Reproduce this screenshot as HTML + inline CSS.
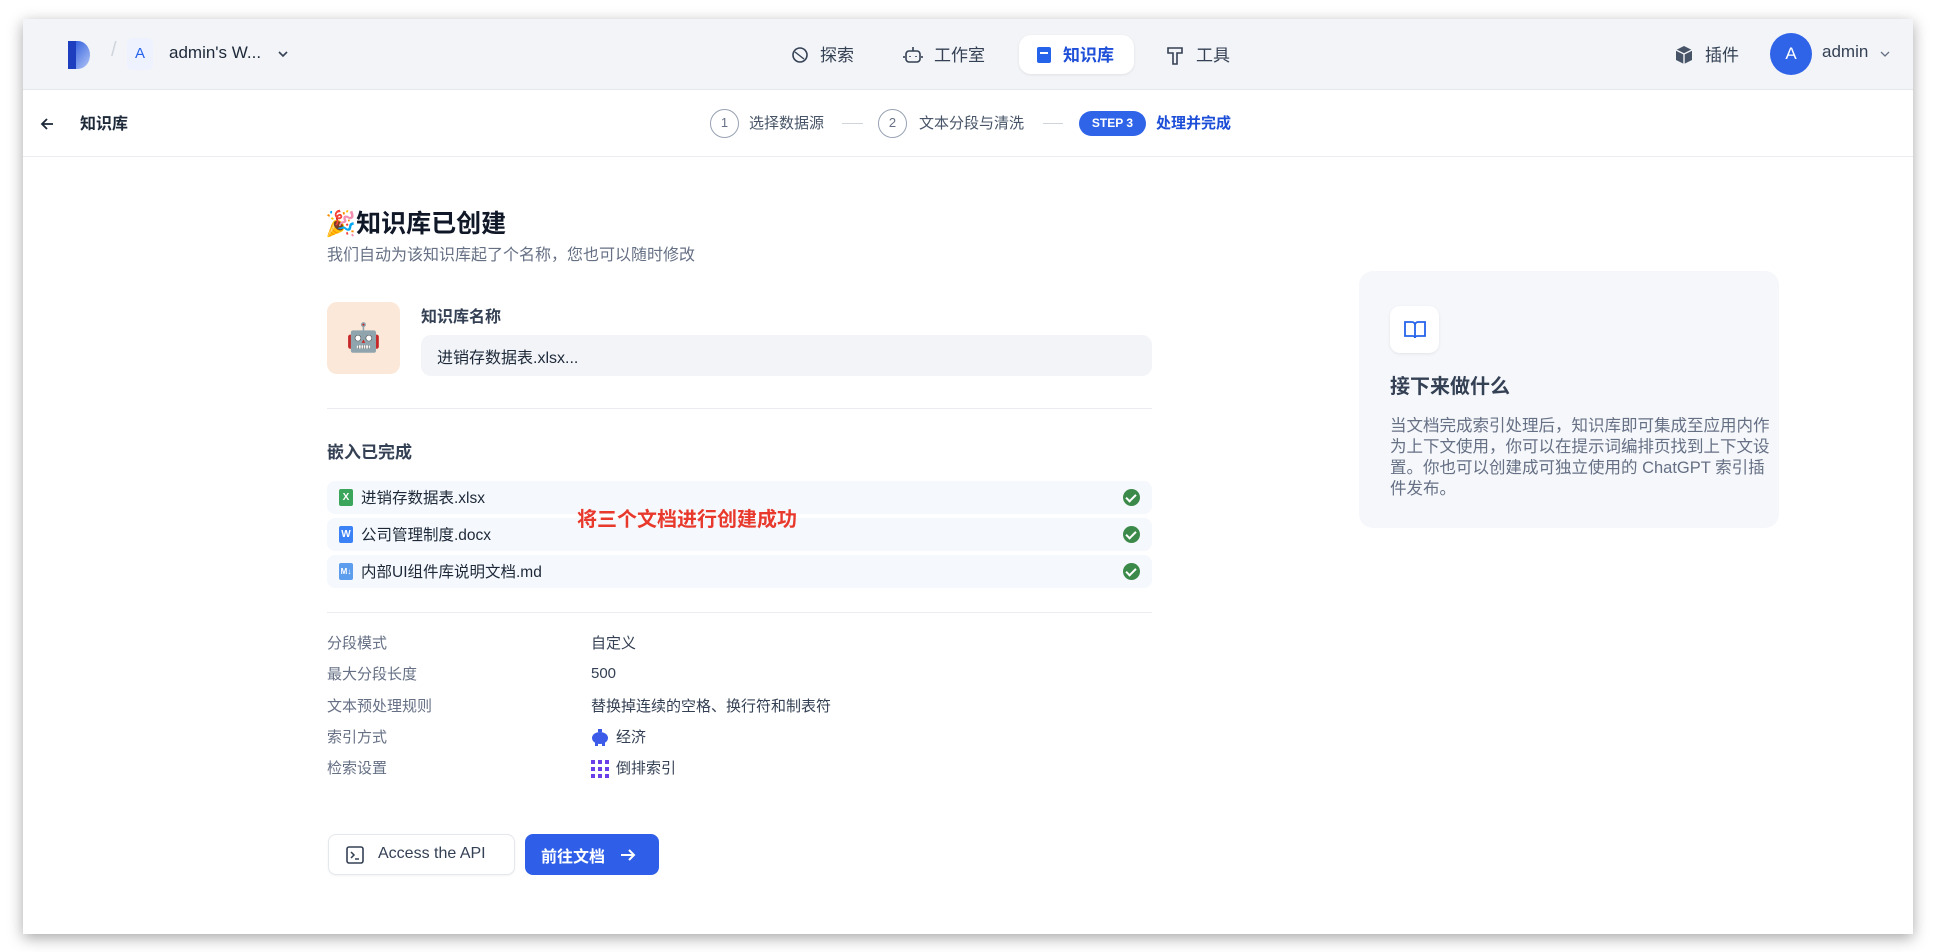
<!DOCTYPE html>
<html><head><meta charset="utf-8"><style>
*{box-sizing:border-box;margin:0;padding:0}
body{width:1934px;height:952px;background:#fff;font-family:"Liberation Sans","Noto Sans CJK SC",sans-serif;position:relative;overflow:hidden;color:#1d2939}
.win{position:absolute;left:23px;top:19px;width:1890px;height:915px;background:#fff;box-shadow:0 4px 14px rgba(0,0,0,.35);overflow:hidden}
.hdr{position:absolute;left:0;top:0;width:100%;height:71px;background:#f2f4f7;border-bottom:1px solid #e4e7ec}
.a{position:absolute;white-space:nowrap}
.sub{position:absolute;left:0;top:71px;width:100%;height:67px;border-bottom:1px solid #eaecf0}
.nav{font-size:17px;color:#344054;top:22px}
.lbl{font-size:15px;color:#667085;left:304px}
.val{font-size:15px;color:#344054;left:568px}
.row{position:absolute;left:304px;width:825px;height:33px;background:#f5f8fc;border-radius:8px;font-size:15.5px;color:#1d2939}
.row span{position:absolute;left:34px;top:5px}
.row i{position:absolute;left:12px;top:8px;width:14px;height:17px;border-radius:2px;color:#fff;font-size:10px;font-style:normal;text-align:center;line-height:17px;font-weight:bold}
.chk{position:absolute;right:12px;top:8px;width:17px;height:17px;border-radius:50%;background:#3c8a4a}
.chk:after{content:"";position:absolute;left:5px;top:3px;width:4px;height:8px;border:solid #fff;border-width:0 2px 2px 0;transform:rotate(45deg)}
</style></head><body>
<div class="win">
 <div class="hdr">
  <svg class="a" style="left:45px;top:22px" width="24" height="28" viewBox="0 0 24 28"><defs><linearGradient id="g" x1="0" y1="0" x2="1" y2="1"><stop offset="0" stop-color="#1d4ed8"/><stop offset="1" stop-color="#b3c7f7"/></linearGradient></defs><path d="M0 0h10a12 14 0 0 1 0 28H0z" fill="url(#g)"/><rect x="0" y="0" width="8" height="28" fill="#1d3fbf"/></svg>
  <div class="a" style="left:88px;top:20px;font-size:20px;color:#d0d5dd">/</div>
  <div class="a" style="left:104px;top:19px;width:26px;height:32px;background:#eef2ff;border-radius:6px;color:#2563eb;font-size:15px;text-align:center;line-height:32px">A</div>
  <div class="a" style="left:146px;top:24px;font-size:17px;color:#1d2939">admin's W...</div>
  <svg class="a" style="left:254px;top:30px" width="12" height="10"><path d="M2 3l4 4 4-4" stroke="#344054" stroke-width="1.6" fill="none"/></svg>
  <svg class="a" style="left:768px;top:27px" width="18" height="18" viewBox="0 0 18 18"><circle cx="9" cy="9" r="7" stroke="#344054" stroke-width="1.6" fill="none"/><path d="M4 6l9 7" stroke="#344054" stroke-width="1.4"/></svg>
  <div class="a nav" style="left:797px">探索</div>
  <svg class="a" style="left:880px;top:26px" width="20" height="20" viewBox="0 0 20 20"><rect x="3" y="6" width="14" height="11" rx="3" stroke="#344054" stroke-width="1.6" fill="none"/><path d="M10 2v4M7 11v1M13 11v1M1 11v2M19 11v2" stroke="#344054" stroke-width="1.6"/></svg>
  <div class="a nav" style="left:911px">工作室</div>
  <div class="a" style="left:996px;top:16px;width:115px;height:39px;background:#fff;border-radius:12px;box-shadow:0 1px 3px rgba(0,0,0,.08)"></div>
  <svg class="a" style="left:1013px;top:27px" width="16" height="18" viewBox="0 0 16 18"><rect x="1" y="1" width="14" height="16" rx="2" fill="#2563eb"/><rect x="4" y="6" width="8" height="2" fill="#fff"/></svg>
  <div class="a nav" style="left:1040px;color:#1d4ed8;font-weight:bold">知识库</div>
  <svg class="a" style="left:1143px;top:27px" width="18" height="20" viewBox="0 0 18 20"><path d="M2 2h14v5H11v11H7V7H2z" stroke="#344054" stroke-width="1.6" fill="none"/></svg>
  <div class="a nav" style="left:1173px">工具</div>
  <svg class="a" style="left:1652px;top:26px" width="18" height="20" viewBox="0 0 18 20"><path d="M9 1l8 4v10l-8 4-8-4V5z" fill="#475467"/><path d="M1 5l8 4 8-4M9 9v10" stroke="#f2f4f7" stroke-width="1.4" fill="none"/></svg>
  <div class="a nav" style="left:1682px">插件</div>
  <div class="a" style="left:1747px;top:14px;width:42px;height:42px;border-radius:50%;background:#2f64e8;color:#fff;font-size:17px;text-align:center;line-height:42px">A</div>
  <div class="a nav" style="left:1799px;top:23px">admin</div>
  <svg class="a" style="left:1857px;top:31px" width="10" height="8"><path d="M1 2l4 4 4-4" stroke="#667085" stroke-width="1.3" fill="none"/></svg>
 </div>
 <div class="sub">
  <svg class="a" style="left:16px;top:26px" width="16" height="16" viewBox="0 0 16 16"><path d="M14 8H3M8 3L3 8l5 5" stroke="#1d2939" stroke-width="1.8" fill="none"/></svg>
  <div class="a" style="left:57px;top:20px;font-size:16px;font-weight:bold">知识库</div>
  <div class="a" style="left:687px;top:19px;width:29px;height:29px;border:1.5px solid #98a2b3;border-radius:50%;font-size:13px;color:#667085;text-align:center;line-height:26px">1</div>
  <div class="a" style="left:726px;top:22px;font-size:15px;color:#475467">选择数据源</div>
  <div class="a" style="left:819px;top:33px;width:21px;height:1px;background:#d0d5dd"></div>
  <div class="a" style="left:855px;top:19px;width:29px;height:29px;border:1.5px solid #98a2b3;border-radius:50%;font-size:13px;color:#667085;text-align:center;line-height:26px">2</div>
  <div class="a" style="left:896px;top:22px;font-size:15px;color:#475467">文本分段与清洗</div>
  <div class="a" style="left:1020px;top:33px;width:20px;height:1px;background:#d0d5dd"></div>
  <div class="a" style="left:1056px;top:21px;width:67px;height:25px;background:#2f64e8;border-radius:13px;color:#fff;font-size:12px;font-weight:bold;text-align:center;line-height:25px">STEP 3</div>
  <div class="a" style="left:1133px;top:22px;font-size:15px;color:#1d4ed8;font-weight:bold">处理并完成</div>
 </div>

 <div class="a" style="left:302px;top:185px;font-size:25px;font-weight:bold;color:#101828">🎉知识库已创建</div>
 <div class="a" style="left:304px;top:222px;font-size:16px;color:#667085">我们自动为该知识库起了个名称，您也可以随时修改</div>
 <div class="a" style="left:304px;top:283px;width:73px;height:72px;background:#fbe8d8;border-radius:10px;text-align:center;line-height:72px;font-size:28px">🤖</div>
 <div class="a" style="left:398px;top:284px;font-size:16px;font-weight:bold;color:#344054">知识库名称</div>
 <div class="a" style="left:398px;top:316px;width:731px;height:41px;background:#f2f4f7;border-radius:10px;font-size:16px;padding:9px 16px;color:#1d2939">进销存数据表.xlsx...</div>
 <div class="a" style="left:304px;top:389px;width:825px;height:1px;background:#eaecf0"></div>
 <div class="a" style="left:304px;top:419px;font-size:17px;font-weight:bold;color:#344054">嵌入已完成</div>
 <div class="row" style="top:462px"><i style="background:#3ba55c">X</i><span>进销存数据表.xlsx</span><div class="chk"></div></div>
 <div class="row" style="top:499px"><i style="background:#3b82f6">W</i><span>公司管理制度.docx</span><div class="chk"></div></div>
 <div class="row" style="top:536px"><i style="background:#5c9ded;font-size:8px">M↓</i><span>内部UI组件库说明文档.md</span><div class="chk"></div></div>
 <div class="a" style="left:554px;top:484px;font-size:20px;font-weight:bold;color:#e8392c">将三个文档进行创建成功</div>
 <div class="a" style="left:304px;top:593px;width:825px;height:1px;background:#eaecf0"></div>
 <div class="a lbl" style="top:613px">分段模式</div><div class="a val" style="top:613px">自定义</div>
 <div class="a lbl" style="top:644px">最大分段长度</div><div class="a val" style="top:646px">500</div>
 <div class="a lbl" style="top:676px">文本预处理规则</div><div class="a val" style="top:676px">替换掉连续的空格、换行符和制表符</div>
 <div class="a lbl" style="top:707px">索引方式</div>
 <svg class="a" style="left:568px;top:709px" width="18" height="18" viewBox="0 0 18 18"><ellipse cx="9" cy="10" rx="8" ry="6" fill="#3b5be8"/><rect x="7" y="1" width="4" height="3" fill="#3b5be8"/><rect x="4" y="14" width="3" height="4" fill="#3b5be8"/><rect x="11" y="14" width="3" height="4" fill="#3b5be8"/></svg>
 <div class="a val" style="top:707px;left:593px">经济</div>
 <div class="a lbl" style="top:738px">检索设置</div>
 <svg class="a" style="left:568px;top:741px" width="18" height="18" viewBox="0 0 18 18" fill="#6a3ee8"><rect x="0" y="0" width="4" height="4"/><rect x="7" y="0" width="4" height="4"/><rect x="14" y="0" width="4" height="4"/><rect x="0" y="7" width="4" height="4"/><rect x="7" y="7" width="4" height="4"/><rect x="14" y="7" width="4" height="4"/><rect x="0" y="14" width="4" height="4"/><rect x="7" y="14" width="4" height="4"/><rect x="14" y="14" width="4" height="4"/></svg>
 <div class="a val" style="top:738px;left:593px">倒排索引</div>

 <div class="a" style="left:305px;top:815px;width:187px;height:41px;border:1px solid #e4e7ec;border-radius:8px;background:#fff;box-shadow:0 1px 2px rgba(0,0,0,.05)">
  <svg class="a" style="left:17px;top:11px" width="18" height="18" viewBox="0 0 18 18"><rect x="1" y="1" width="16" height="16" rx="2" stroke="#344054" stroke-width="1.6" fill="none"/><path d="M5 6l3 3-3 3M9 13h4" stroke="#344054" stroke-width="1.5" fill="none"/></svg>
  <div class="a" style="left:49px;top:10px;font-size:16px;color:#344054">Access the API</div>
 </div>
 <div class="a" style="left:502px;top:815px;width:134px;height:41px;border-radius:8px;background:#2f5fe8">
  <div class="a" style="left:16px;top:9px;font-size:16px;color:#fff;font-weight:bold">前往文档</div>
  <svg class="a" style="left:94px;top:12px" width="18" height="18" viewBox="0 0 18 18"><path d="M2 9h13M10 4l5 5-5 5" stroke="#fff" stroke-width="2" fill="none"/></svg>
 </div>

 <div class="a" style="left:1336px;top:252px;width:420px;height:257px;background:#f5f7fa;border-radius:14px">
  <div class="a" style="left:31px;top:35px;width:49px;height:47px;background:#fff;border-radius:10px;box-shadow:0 1px 3px rgba(0,0,0,.08)">
   <svg class="a" style="left:14px;top:14px" width="22" height="20" viewBox="0 0 22 20"><path d="M1 2h7a3 3 0 0 1 3 3v13a2 2 0 0 0-2-2H1zM21 2h-7a3 3 0 0 0-3 3v13a2 2 0 0 1 2-2h8z" stroke="#2563eb" stroke-width="1.8" fill="none"/></svg>
  </div>
  <div class="a" style="left:31px;top:99px;font-size:20px;font-weight:bold;color:#344054">接下来做什么</div>
  <div class="a" style="left:31px;top:145px;width:381px;white-space:normal;font-size:16.5px;line-height:21px;color:#667085">当文档完成索引处理后，知识库即可集成至应用内作为上下文使用，你可以在提示词编排页找到上下文设置。你也可以创建成可独立使用的 ChatGPT 索引插件发布。</div>
 </div>
</div>
</body></html>
